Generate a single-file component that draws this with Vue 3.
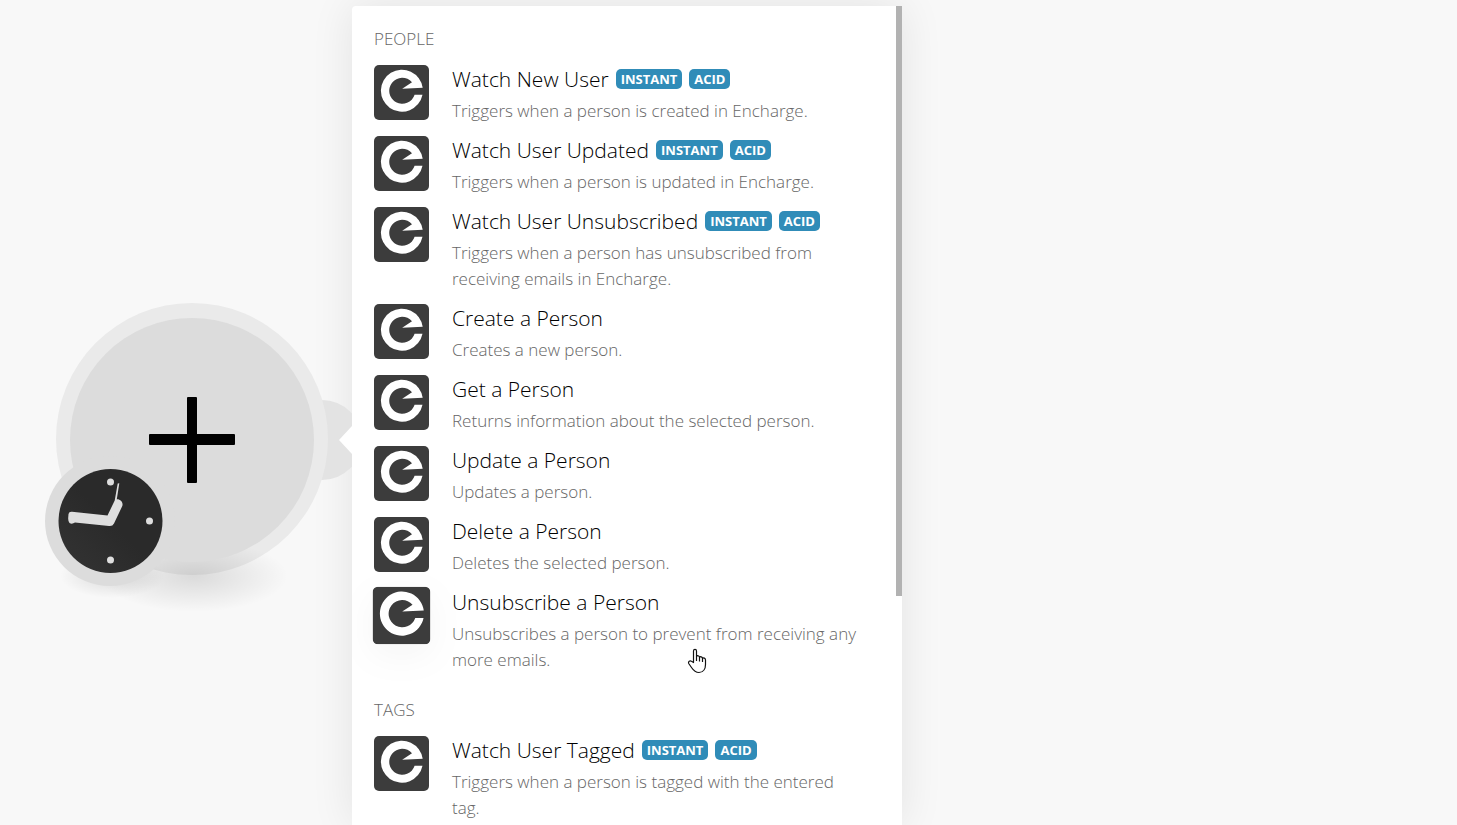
<template>
  <div class="canvas">
    <!-- scenario node -->
    <div class="stage">
      <button class="module" aria-label="Add module">
        <svg viewBox="0 290 352 340" width="352" height="340">
          <defs>
            <radialGradient id="shade">
              <stop offset="0" stop-color="#000" stop-opacity="0.12" />
              <stop offset="0.5" stop-color="#000" stop-opacity="0.06" />
              <stop offset="1" stop-color="#000" stop-opacity="0" />
            </radialGradient>
            <linearGradient id="face" x1="0" y1="1" x2="1" y2="0">
              <stop offset="0" stop-color="#343434" />
              <stop offset="0.5" stop-color="#2a2a2a" />
            </linearGradient>
          </defs>
          <circle cx="322" cy="440" r="40" fill="#e3e3e3" />
          <circle cx="192" cy="439" r="136" fill="#eaeaea" />
          <ellipse cx="194" cy="576" rx="94" ry="36" fill="url(#shade)" />
          <ellipse cx="112" cy="576" rx="52" ry="22" fill="url(#shade)" />
          <circle cx="192" cy="440" r="122" fill="#dcdcdc" />
          <circle cx="110" cy="521" r="65" fill="#dcdcdc" />
          <path d="M339 440 L352 426 V454 Z" fill="#fff" />
          <rect x="149" y="434" width="86" height="11" rx="1" />
          <rect x="187" y="397" width="10" height="86" rx="1" />
          <circle cx="110.500" cy="521" r="52" fill="url(#face)" />
          <g fill="#dedede">
            <circle cx="110.500" cy="482" r="3.500" />
            <circle cx="149.500" cy="521" r="3.500" />
            <circle cx="110.500" cy="560" r="3.500" />
            <path d="M68.500 514 Q69 511.500 72 511.800 L107.500 515.500 L114.700 500.500 L117.700 483.500 L119.300 483.300 L116.800 499.300 C120.500 499 123.500 502.500 122.300 506 L114 523.500 Q112.500 526.500 109 526 L75 522.500 Q72 524.500 69.500 523 Q68 521.500 68.200 518 Z" />
          </g>
        </svg>
      </button>
    </div>

    <!-- action picker -->
    <div class="popup">
      <div class="list">
        <section v-for="g in groups" :key="g.name" class="group">
          <h2>{{ g.name }}</h2>
          <button
            v-for="a in g.actions"
            :key="a.title"
            :class="['action', { hovered: a.title === hovered }]"
          >
            <svg class="logo" viewBox="0 0 55 55">
              <rect width="55" height="55" rx="5" fill="#3c3c3c" />
              <path
                d="M48.700 22.700 A21 21 0 1 0 48.500 29.800 H40.600 A13 13 0 1 1 38 17.200 L28.200 23.800 Z"
                fill="#fff"
              />
            </svg>
            <span class="info">
              <span class="title">
                {{ a.title }}
                <span v-for="t in a.tags" :key="t" class="tag">{{ t }}</span>
              </span>
              <span class="desc">{{ a.desc }}</span>
            </span>
          </button>
        </section>
      </div>
      <div class="track"><div class="thumb"></div></div>

      <svg class="pointer" viewBox="0 0 20 26" width="20" height="26">
        <path
          d="M6.500 14.500 V3 C6.500 0.800 9.500 0.800 9.500 3 V8.500 C10 7.200 12.500 7.400 12.500 9.500 C13.200 8.200 15.500 8.600 15.500 10.500 C16.500 9.500 18.500 10 18.500 12 V16.500 C18.500 20.500 16.500 24.500 12 24.500 C8 24.500 6.500 22.500 4.500 19.500 L1.700 15.500 C0.800 13.500 3 12.200 4.500 13.300 Z M9.500 8.500 V13 M12.500 9.500 V13.500 M15.500 10.500 V14"
          fill="#fff"
          stroke="#111"
          stroke-width="1.200"
          stroke-linejoin="round"
        />
      </svg>
    </div>
  </div>
</template>

<script setup>
import { ref } from 'vue'

const hovered = ref('Unsubscribe a Person')

const instant = ['INSTANT', 'ACID']

const groups = ref([
  {
    name: 'PEOPLE',
    actions: [
      { title: 'Watch New User', desc: 'Triggers when a person is created in Encharge.', tags: instant },
      { title: 'Watch User Updated', desc: 'Triggers when a person is updated in Encharge.', tags: instant },
      { title: 'Watch User Unsubscribed', desc: 'Triggers when a person has unsubscribed from receiving emails in Encharge.', tags: instant },
      { title: 'Create a Person', desc: 'Creates a new person.' },
      { title: 'Get a Person', desc: 'Returns information about the selected person.' },
      { title: 'Update a Person', desc: 'Updates a person.' },
      { title: 'Delete a Person', desc: 'Deletes the selected person.' },
      { title: 'Unsubscribe a Person', desc: 'Unsubscribes a person to prevent from receiving any more emails.' }
    ]
  },
  {
    name: 'TAGS',
    actions: [
      { title: 'Watch User Tagged', desc: 'Triggers when a person is tagged with the entered tag.', tags: instant }
    ]
  }
])
</script>

<style>
body {
  background: #f8f8f8;
}
</style>

<style scoped>
.canvas {
  display: flex;
  height: 100vh;
  padding-top: 6px;
  box-sizing: border-box;
  overflow: hidden;
  background: #f8f8f8;
  font-family: "Segoe UI", "Open Sans", sans-serif;
  font-weight: 350;
}

button {
  padding: 0;
  border: none;
  background: none;
  font: inherit;
  text-align: left;
  cursor: pointer;
}

/* ===== node ===== */
.stage {
  position: relative;
  z-index: 1;
  flex: 0 0 352px;
}

.module {
  position: absolute;
  top: 284px;
  left: 0;
}

.module svg {
  display: block;
}

/* ===== popup ===== */
.popup {
  position: relative;
  display: flex;
  width: 550px;
  background: #fff;
  border-radius: 4px 0 0 0;
  box-shadow: 0 0 44px rgba(0, 0, 0, 0.09);
}

.list {
  flex: 1;
  padding: 20px 34px 20px 22px;
  overflow: hidden;
}

.group {
  margin-bottom: 24px;
}

h2 {
  margin: 0 0 12px;
  font-size: 17px;
  line-height: 26px;
  font-weight: 350;
  color: #666;
}

.action {
  display: flex;
  gap: 23px;
  width: 100%;
  margin-bottom: 11px;
}

.logo {
  flex: 0 0 55px;
  height: 55px;
  margin-top: 1px;
}

.hovered .logo {
  transform: scale(1.05);
  filter: drop-shadow(0 10px 16px rgba(0, 0, 0, 0.04));
}

.info {
  display: flex;
  flex: 1;
  flex-direction: column;
  gap: 4px;
}

.title {
  display: flex;
  align-items: center;
  gap: 7px;
  font-size: 21px;
  line-height: 30px;
  color: #000;
}

.tag {
  padding: 0 5px;
  border-radius: 5px;
  background: #308cb8;
  color: #fff;
  font-size: 13px;
  line-height: 20px;
  font-weight: 700;
}

.desc {
  font-size: 17px;
  line-height: 26px;
  color: #666;
}

.track {
  flex: 0 0 6px;
}

.thumb {
  height: 72%;
  background: #b2b2b2;
}

.pointer {
  position: absolute;
  top: 642px;
  left: 335px;
}
</style>
